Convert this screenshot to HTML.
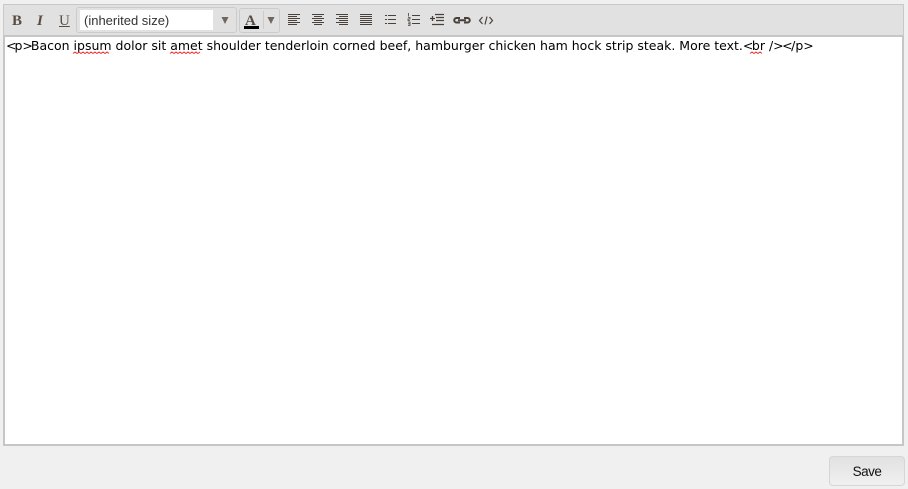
<!DOCTYPE html>
<html><head><meta charset="utf-8"><style>
html,body{margin:0;padding:0;width:908px;height:489px;overflow:hidden;background:#f0f0f0}
div,svg,span{position:absolute;box-sizing:border-box}
#tb{left:3px;top:4px;width:901px;height:32px;background:#e1e1e1;border:1px solid #c8c8c8;border-bottom:0}
#ed{left:3px;top:35px;width:901px;height:411px;background:#fff;border:2px solid #c6c6c6;}
#tx{left:6px;top:38px;font:12.5px/16px "DejaVu Sans",Verdana,sans-serif;color:#000;white-space:pre}
#tx i{font-style:normal;letter-spacing:-2px}
#tx u{text-decoration:none;letter-spacing:-1.5px}
.b{font-family:"Liberation Serif",serif;font-size:14px;font-weight:bold;color:#574c44;line-height:16px;top:13px}
#sel{left:76px;top:7px;width:161px;height:26px;background:#e1e1e1;border:1px solid #cbcbcb;border-radius:3px}
#in{left:80px;top:10px;width:133px;height:20px;background:#fff}
#lab{left:84px;top:12px;font:13px/17px "Liberation Sans",sans-serif;color:#333;white-space:pre}
#col{left:239px;top:8px;width:41px;height:25px;border:1px solid #cbcbcb;border-radius:3px}
#sv{left:829px;top:456px;width:76px;height:30px;border:1px solid #d6d6d6;border-radius:4px;background:linear-gradient(#e1e1e1,#f0f0f0);font:13.5px/29px "Liberation Sans",sans-serif;letter-spacing:-.5px;color:#111;text-align:center}
</style></head><body>
<div id="tb"></div>
<div id="ed"></div>
<div id="tx"><i>&lt;</i>p<i>&gt;</i>Bacon ipsum dolor sit amet shoulder tenderloin corned beef, hamburger chicken ham hock strip steak. More text.<u>&lt;</u>br /<u>&gt;&lt;</u>/p<u>&gt;</u></div>
<svg style="left:0;top:0" width="908" height="60" fill="none">
<path d="M73 53.500l2-1.500 2 1.500 2-1.500 2 1.500 2-1.500 2 1.500 2-1.500 2 1.500 2-1.500 2 1.500 2-1.500 2 1.500 2-1.500 2 1.500 2-1.500 2 1.500 2-1.500 2 1.500M170 53.500l2-1.500 2 1.500 2-1.500 2 1.500 2-1.500 2 1.500 2-1.500 2 1.500 2-1.500 2 1.500 2-1.500 2 1.500 2-1.500 2 1.500 2-1.500M750 53.500l2-1.500 2 1.500 2-1.500 2 1.500 2-1.500 2 1.500" stroke="#e33" stroke-width="1"/>
</svg>
<span class="b" style="left:12px;font-size:15px">B</span>
<span class="b" style="left:37px;font-style:italic;font-size:15px">I</span>
<span class="b" style="left:59px;font-weight:normal;font-size:15px;text-decoration:underline">U</span>
<div id="sel"></div><div id="in"></div><div id="lab">(inherited size)</div>
<svg style="left:221px;top:17px" width="8" height="7"><path d="M0.500 0h7l-3.500 7z" fill="#6f665f"/></svg>
<div id="col"></div>
<span class="b" style="left:245px;top:13px;font-size:15px">A</span>
<div style="left:244px;top:26px;width:15px;height:3px;background:#000"></div>
<div style="left:263px;top:11px;width:1px;height:18px;background:#cbcbcb"></div>
<svg style="left:267px;top:17px" width="8" height="7"><path d="M0.500 0h7l-3.500 7z" fill="#6f665f"/></svg>
<svg style="left:280px;top:5px" width="220" height="30" fill="none" stroke="#4a413b" stroke-width="1">
<path d="M8 9.500h12M8 11.500h9M8 13.500h12M8 15.500h9M8 17.500h12M8 19.500h9"/>
<path d="M32 9.500h12M34 11.500h8M32 13.500h12M34 15.500h8M32 17.500h12M34 19.500h8"/>
<path d="M56 9.500h12M59 11.500h9M56 13.500h12M59 15.500h9M56 17.500h12M59 19.500h9"/>
<path d="M80 9.500h12M80 11.500h12M80 13.500h12M80 15.500h12M80 17.500h12M80 19.500h12"/>
<path d="M108 10.500h8M108 14.500h8M108 18.500h8M105 10.500h2M105 14.500h2M105 18.500h2"/>
<path d="M132 10.500h8M132 14.500h8M132 18.500h8"/>
<path d="M128.500 8v3.500M128 12.500h2v1.500h-2v1.500h2M128 17h2v3.500h-2M128 18.800h2" stroke-width=".8"/>
<path d="M150 13.500h5M152.500 11v5M155 9.500h9M156 12.500h8M156 15.500h8M152 19.500h12" stroke-width="1.300"/>
<path d="M180 13h-3.500a2 2 0 0 0 0 4.500h3.500M184 13h3.500a2 2 0 0 1 0 4.500h-3.500M178 15.200h8" stroke-width="2"/>
<path d="M202.500 12l-3 3.500 3 3.500M205 19.500l2-8M209.500 12l3 3.500-3 3.500" stroke-width="1.200"/>
</svg>
<div id="sv">Save</div>
</body></html>
